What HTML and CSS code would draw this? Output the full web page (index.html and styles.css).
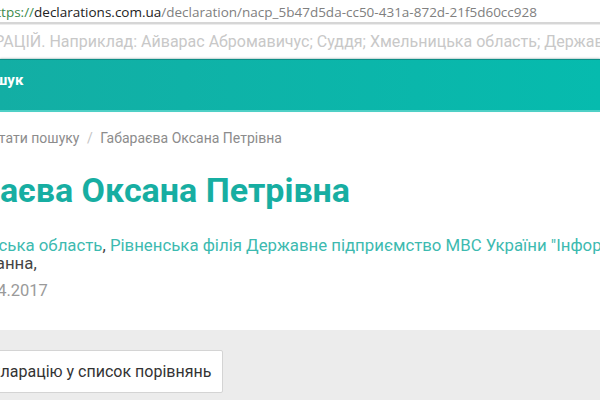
FILE: index.html
```html
<!DOCTYPE html>
<html lang="uk">
<head>
    <meta charset="UTF-8">
    <meta name="viewport" content="width=device-width, initial-scale=1.0">
    <title>Габараєва Оксана Петрівна</title>
    <link rel="stylesheet" href="styles.css">
</head>
<body>
    <div class="urlbar">
        <span class="url"><span class="scheme">https://</span><span class="host">declarations.com.ua</span>/declaration/nacp_5b47d5da-cc50-431a-872d-21f5d60cc928</span>
    </div>

    <div class="search">
        <span class="placeholder">ДЕКЛАРАЦІЙ. Наприклад: Айварас Абромавичус; Суддя; Хмельницька область; Державна служба</span>
    </div>

    <div class="toolbar">
        <span class="toolbar-title">Пошук</span>
    </div>

    <div class="content">
        <div class="breadcrumbs">
            <a href="#">Результати пошуку</a>
            <span class="sep">/</span>
            <span>Габараєва Оксана Петрівна</span>
        </div>

        <h1 class="name">Габараєва Оксана Петрівна</h1>

        <div class="job">
            <a href="#">Рівненська область</a>, <a href="#">Рівненська філія Державне підприємство МВС України "Інформ-Ресурси"</a>
        </div>
        <div class="position">Старша адміністраторка Ганна,</div>
        <div class="date">13.04.2017</div>
    </div>

    <div class="actions">
        <button class="compare">Додати декларацію у список порівнянь</button>
    </div>
</body>
</html>
```

FILE: styles.css
```css
body {
    margin: 0;
    font-family: Roboto, "Noto Sans", sans-serif;
    background-color: #ffffff;
    overflow: hidden;
    width: 600px;
    height: 400px;
}

a {
    text-decoration: none;
}

.urlbar {
    height: 24px;
    padding-top: 1px;
    border-bottom: 2px solid #d6d6d6;
    white-space: nowrap;
    overflow: hidden;
    box-sizing: border-box;
}

.url {
    display: inline-block;
    margin-left: -12px;
    font-family: "Open Sans", sans-serif;
    font-size: 13.5px;
    line-height: 22px;
    color: #808080;
}

.scheme {
    color: #3b8a4d;
}

.host {
    color: #222222;
}

.search {
    height: 33px;
    border-top: 1px solid #ececec;
    border-bottom: 1px solid #e3f6f4;
    white-space: nowrap;
    overflow: hidden;
}

.placeholder {
    display: inline-block;
    margin-left: -59px;
    font-size: 16px;
    line-height: 34px;
    color: #c8c8c8;
}

.toolbar {
    height: 50px;
    background: linear-gradient(90deg, #13aea4, #06bbae);
    border-top: 1px solid #0c8e86;
    box-shadow: 0 -1px 2px rgba(0, 0, 0, 0.15);
    display: flex;
    align-items: center;
    border-bottom: 2px solid #4fd0c6;
    overflow: hidden;
}

.toolbar-title {
    margin-left: -22px;
    margin-top: -10px;
    color: #ffffff;
    font-weight: 700;
    font-size: 15px;
    text-transform: lowercase;
}

.content {
    white-space: nowrap;
    overflow: hidden;
    padding: 16px 0 28px;
}

.breadcrumbs {
    margin-left: -46px;
    font-size: 14px;
    line-height: 20px;
    color: #8c8c8c;
}

.breadcrumbs a {
    color: #8c8c8c;
}

.breadcrumbs .sep {
    color: #c4c4c4;
    margin: 0 4px;
}

.name {
    margin: 20px 0 0 -91px;
    font-size: 34px;
    line-height: 44px;
    font-weight: 700;
    color: #17aea2;
}

.job {
    margin: 24px 0 0 -54px;
    font-size: 16.8px;
    line-height: 18px;
    color: #444444;
}

.job a {
    color: #3dbab0;
}

.position {
    margin-left: -210px;
    font-size: 16.8px;
    line-height: 18px;
    color: #444444;
}

.date {
    margin: 8px 0 0 -35px;
    font-size: 16.5px;
    line-height: 22px;
    color: #9a9a9a;
}

.actions {
    background-color: #ececec;
    padding: 20px 0 10px;
    height: 100px;
    overflow: hidden;
}

.compare {
    margin-left: -101px;
    height: 43px;
    padding: 0 11px 0 14px;
    background-color: #ffffff;
    border: 1px solid #d4d4d4;
    border-radius: 2px;
    font-family: Roboto, sans-serif;
    font-size: 16px;
    color: #333333;
    cursor: pointer;
}
```
